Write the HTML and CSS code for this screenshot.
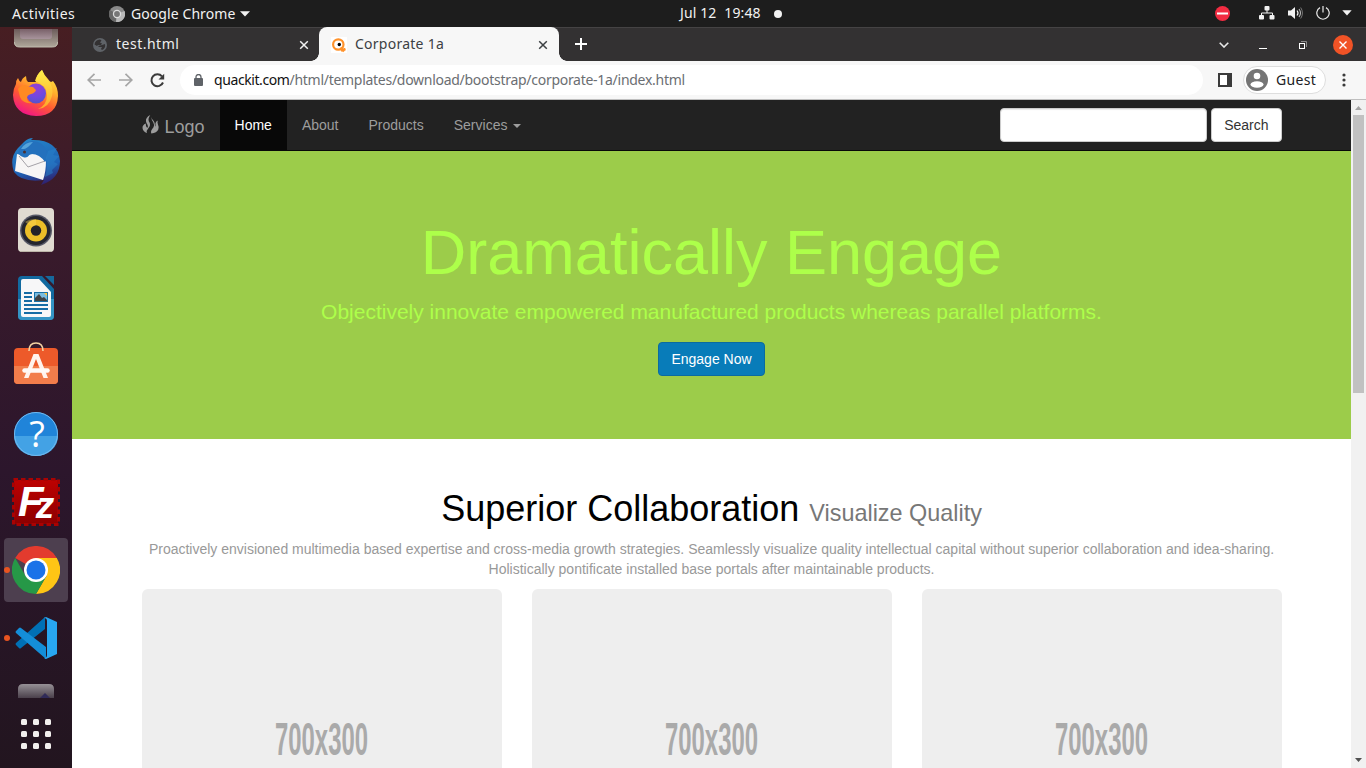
FILE: index.html
```html
<!DOCTYPE html>
<html lang="en">
<head>
<meta charset="utf-8">
<title>Corporate 1a</title>
<link rel="stylesheet" href="styles.css">
</head>
<body>
<header class="topbar">
  <span class="activities">Activities</span>
  <svg class="app-icon" width="16" height="16" viewBox="0 0 16 16"><circle cx="8" cy="8" r="8" fill="#8a8a8a"/><path d="M8 8 L1 4 A8 8 0 0 0 7 16Z" fill="#686868"/><path d="M8 8 L15.5 5 A8 8 0 0 1 7 16Z" fill="#b8b8b8"/><circle cx="8" cy="8" r="4.2" fill="#ddd"/><circle cx="8" cy="8" r="2.9" fill="#777"/></svg>
  <span class="app-name">Google Chrome</span>
  <svg class="app-caret" width="10" height="6" viewBox="0 0 10 6"><path d="M0 .3h10L5 5.6z" fill="#f2f2f2"/></svg>
  <div class="clock"><span>Jul 12</span><span>19:48</span><i class="dot"></i></div>
  <div class="tray">
    <svg width="15" height="15" viewBox="0 0 15 15"><circle cx="7.5" cy="7.5" r="7.5" fill="#f22c42"/><rect x="2" y="6.5" width="11" height="2" fill="#fff"/></svg>
    <svg class="net" width="16" height="14" viewBox="0 0 16 14" fill="#f2f2f2"><rect x="5.5" y="0" width="5" height="4.5" rx="1"/><rect x="0" y="9" width="5" height="4.500" rx="1"/><rect x="10.500" y="9" width="5" height="4.500" rx="1"/><path d="M8 4v3M2.500 9.500V7h11v2.500" fill="none" stroke="#f2f2f2"/></svg>
    <svg class="vol" width="16" height="14" viewBox="0 0 16 14"><path d="M0 4.500h3L7 1v12L3 9.500H0z" fill="#f2f2f2"/><path d="M9 4.500q2 2.500 0 5" fill="none" stroke="#f2f2f2" stroke-width="1.200"/><path d="M11 3q3 4 0 8" fill="none" stroke="#bbb" stroke-width="1.100"/><path d="M12.700 1.500q3.500 5.500 0 11" fill="none" stroke="#777"/></svg>
    <svg class="power" width="14" height="14" viewBox="0 0 14 14" fill="none" stroke="#e8e8e8" stroke-width="1.200"><path d="M4 1.600a6.200 6.200 0 1 0 6 0M7 0v6.500"/></svg>
    <svg class="tcaret" width="10" height="6" viewBox="0 0 10 6"><path d="M.3.300h9.400L5 5.400z" fill="#f2f2f2"/></svg>
  </div>
</header>
<div class="desktop">
  <aside class="dock">
    <div class="slot-files"><svg width="44" height="21" viewBox="0 0 44 21"><defs><linearGradient id="fg" x2="0" y2="1"><stop stop-color="#6b5a59"/><stop offset="1" stop-color="#b0a89b"/></linearGradient><linearGradient id="fi" x2="0" y2="1"><stop stop-color="#786068"/><stop offset="1" stop-color="#a8949c"/></linearGradient></defs><path d="M0 2h44v13q0 5-5 5H5q-5 0-5-5z" fill="url(#fg)"/><path d="M.500 15q0 5 5 5h33q5 0 5-5" fill="none" stroke="#c0bcae"/><path d="M6 2h32v7q0 3-3 3H9q-3 0-3-3z" fill="url(#fi)"/></svg></div>
    <div class="slot"><svg width="48" height="48" viewBox="0 0 48 48"><defs><linearGradient id="ff" x1=".8" y1="0" x2=".3" y2="1"><stop stop-color="#fff14a"/><stop offset=".35" stop-color="#ffb02c"/><stop offset=".65" stop-color="#ff5a32"/><stop offset="1" stop-color="#f0128a"/></linearGradient><linearGradient id="fy" x2="0" y2="1"><stop stop-color="#fff04a"/><stop offset="1" stop-color="#ffa52a"/></linearGradient><radialGradient id="fp" cx=".5" cy=".2" r=".8"><stop stop-color="#9a3fd0"/><stop offset=".6" stop-color="#7048e0"/><stop offset="1" stop-color="#5654c8"/></radialGradient></defs><path d="M4 14Q4 10 6 8q1 3 3 4 1-4 5-6 0 4 2 6l8 0q0-7 6-12 2 5 6 9 1 2 3 3l2-1q5 6 5 15Q45 46 24 46 2 45 1 25 1 19 4 14z" fill="url(#ff)"/><path d="M23 11q2-7 7-11 2 6 6 10 6 7 4 16-3 12-14 13 9-4 9-14 0-10-12-14z" fill="url(#fy)"/><circle cx="24" cy="23.500" r="10" fill="url(#fp)"/><path d="M6 19q3-4 7-4 4 2 8 2l3 3q-1 3-5 4-4 1-4 4 0 4 5 5-9 1-12-6z" fill="#ff8a22"/></svg></div>
    <div class="slot"><svg width="48" height="48" viewBox="0 0 48 48"><defs><linearGradient id="tb" x1=".3" y1="0" x2=".6" y2="1"><stop stop-color="#2585c9"/><stop offset=".65" stop-color="#1e62b5"/><stop offset="1" stop-color="#30206e"/></linearGradient></defs><path d="M12 4q4-4 9-4l-2 2q27-1 29 21 0 18-19 24l3-5Q10 45 2 34-3 20 6 10z" fill="url(#tb)"/><path d="M5 16l8 2 11-3 10 7q0 12-3 20L3 33z" fill="#f7f5f5"/><path d="M7 18l9 11 17-6" fill="none" stroke="#a5a2a8"/><path d="M6 15Q9 4 20 3q12 0 15 12 1 7-2 9-6-9-15-8-3 5-7 3-3-1-5-4z" fill="#2471bd"/><path d="M9 11q4-7 12-7-6 7-9 7z" fill="#56a4da"/><path d="M36 13l9-3-4 7 6 1-5 6 4 2-6 6 1 3-8 4q3-10 1-19z" fill="#2a80c8" opacity=".55"/><circle cx="12.500" cy="14" r="1.500" fill="#4b3030"/></svg></div>
    <div class="slot"><svg width="48" height="48" viewBox="0 0 48 48"><rect x="6" y="2" width="36" height="44" rx="4" fill="#e0dbd1"/><path d="M8 45.500h32" stroke="#bbb5a8"/><circle cx="24" cy="24.500" r="16" fill="#575967"/><circle cx="24" cy="24.500" r="14.500" fill="#24262f"/><circle cx="24" cy="24.500" r="11" fill="#ebbf28"/><circle cx="24" cy="24.500" r="5.200" fill="#222329"/><path d="M20 21l-7-5q4-3 11-3v6z" fill="#ffd95c" opacity=".4"/></svg></div>
    <div class="slot"><svg width="48" height="48" viewBox="0 0 48 48"><path d="M10 2h20l12 13v27q0 4-4 4H10q-4 0-4-4V6q0-4 4-4z" fill="#126aa0"/><path d="M6 25h36v17q0 4-4 4H10q-4 0-4-4z" fill="#3494c5"/><path d="M11 5h16l12 13v23q0 2-2 2H11q-2 0-2-2V7q0-2 2-2z" fill="#f7f7f8"/><path d="M33 2h9v9z" fill="#16699d"/><path d="M12 19h8M12 23h8M12 27h8M12 31h24M12 35h24M12 39h18" stroke="#166ca5" stroke-width="2"/><rect x="22" y="18" width="14" height="10" fill="#1870a6"/><rect x="23" y="19" width="12" height="8" fill="#7abce0"/><path d="M23 27v-3l4-4 3 4 2-1 3 3v1z" fill="#404346"/><path d="M32 19h3v3z" fill="#ffc437"/></svg></div>
    <div class="slot"><svg width="48" height="48" viewBox="0 0 48 48"><rect x="2" y="6" width="44" height="36" rx="4" fill="#ed5a2a"/><path d="M2 24h44v14q0 4-4 4H6q-4 0-4-4z" fill="#f27d4b"/><path d="M17 9q0-8 7-8t7 8" fill="none" stroke="#f4d2a3" stroke-width="1.600"/><path d="M12 36l9.500-24h5L36 36h-4.500L24 17l-7.500 19z" fill="#fff3ed"/><path d="M12.500 28.500h23" stroke="#fff9f6" stroke-width="4.500" stroke-linecap="round"/></svg></div>
    <div class="slot"><svg width="48" height="48" viewBox="0 0 48 48"><circle cx="24" cy="24" r="22" fill="#2084d9"/><path d="M2 26a22 20 0 0 0 44 0z" fill="#43a2e5"/><circle cx="24" cy="24" r="21.500" fill="none" stroke="#73b9ed"/><text x="25" y="37" class="help-mark">?</text></svg></div>
    <div class="slot"><svg width="48" height="48" viewBox="0 0 48 48"><defs><linearGradient id="fz" x2="0" y2="1"><stop stop-color="#bd0101"/><stop offset="1" stop-color="#8c0001"/></linearGradient></defs><rect x="2" y="2" width="44" height="44" fill="url(#fz)"/><rect x="1.500" y="1.500" width="45" height="45" fill="none" stroke="#aa0202" stroke-width="3" stroke-dasharray="4.500 3"/><text x="6" y="38" class="fz-mark">F<tspan dx="-8" dy="2" class="fz-z">z</tspan></text></svg></div>
    <div class="slot active"><svg width="48" height="48" viewBox="0 0 48 48"><path d="M24 24L3.200 12A24 24 0 0 1 44.800 12z" fill="#e33b2e"/><path d="M24 12h20.800A24 24 0 0 1 24 48l10.400-18z" fill="#fec515"/><path d="M13.600 30L3.200 12A24 24 0 0 0 24 48l10.400-18z" fill="#269847"/><circle cx="24" cy="24" r="12" fill="#fff"/><circle cx="24" cy="24" r="9.500" fill="#1a72e8"/></svg></div>
    <div class="slot running"><svg width="48" height="48" viewBox="0 0 48 48"><path d="M33 3v12L9 34q-1 1-2 0l-3-3q-1-1 0-2z" fill="#0070b5"/><path d="M7 14q1-1 2 0l25 19v12L4 19q-1-1 0-2z" fill="#148ed8"/><path d="M34 3l11 5v32l-11 5-2-1q3 0 3-3V7q0-3-3-3z" fill="#28a7f1"/></svg></div>
    <div class="slot-trash"><svg width="36" height="14" viewBox="0 0 36 14"><defs><linearGradient id="tr" x2="0" y2="1"><stop stop-color="#969196"/><stop offset="1" stop-color="#4a404b"/></linearGradient></defs><path d="M0 14V5q0-5 5-5h26q5 0 5 5v9z" fill="url(#tr)"/><path d="M22 14l5-5 5 5z" fill="#302b58"/></svg></div>
    <div class="apps"><i></i><i></i><i></i><i></i><i></i><i></i><i></i><i></i><i></i></div>
  </aside>
  <main class="window">
    <div class="tabs">
      <div class="tab">
        <svg width="14" height="14" viewBox="0 0 14 14"><circle cx="7" cy="7" r="7" fill="#5f6368"/><path d="M7 1.500l1.500 1L7 4.500l2 1-1 1.500H5l-1 1-2.500-1.500Q2 2 7 1.500zM9 7l3-1q1 4-3 6l-1-1 1-2H6L5 8z" fill="#333132"/></svg>
        <span class="t1">test.html</span>
        <svg class="close" width="10" height="10" viewBox="0 0 10 10"><path d="M1.200 1.200l7.600 7.600M8.800 1.200L1.200 8.800" stroke="#f1f1f1" stroke-width="1.500"/></svg>
      </div>
      <div class="tab current">
        <svg width="16" height="16" viewBox="0 0 16 16"><path fill="#fff" d="M0 0h16v16H0z"/><circle cx="7.300" cy="7.500" r="5.200" fill="#fff" stroke="#ff922b" stroke-width="2.200"/><path d="M9.500 10.500l3.500 4M10 13.500l4.500-1.500" stroke="#ff922b" stroke-width="2.400"/><circle cx="8.300" cy="7.500" r="1.700"/></svg>
        <span class="t2">Corporate 1a</span>
        <svg class="close" width="10" height="10" viewBox="0 0 10 10"><path d="M1.200 1.200l7.600 7.600M8.800 1.200L1.200 8.800" stroke="#3c4043" stroke-width="1.500"/></svg>
      </div>
      <svg class="plus" width="12" height="12" viewBox="0 0 12 12"><path d="M6 0v12M0 6h12" stroke="#fff" stroke-width="2"/></svg>
      <div class="wincontrols">
        <svg width="10" height="6" viewBox="0 0 10 6"><path d="M.700.700L5 5 9.300.700" fill="none" stroke="#e8e8e8" stroke-width="1.600"/></svg>
        <svg class="min" width="8" height="6" viewBox="0 0 8 6"><path d="M0 5.500h8" stroke="#fff"/></svg>
        <svg class="max" width="8" height="8" viewBox="0 0 8 8"><path d="M2 .500h5.500V6" fill="none" stroke="#8c8b8b"/><rect x=".500" y="2.500" width="5" height="5" fill="none" stroke="#fff"/></svg>
        <svg class="x" width="20" height="20" viewBox="0 0 20 20"><circle cx="10" cy="10" r="10" fill="#f15326"/><path d="M6.500 6.500l7 7M13.500 6.500l-7 7" stroke="#fff" stroke-width="1.400"/></svg>
      </div>
    </div>
    <div class="toolbar">
      <svg class="back" width="14" height="14" viewBox="0 0 14 14" fill="none" stroke="#a6a6a6" stroke-width="1.700"><path d="M14 7H1.500M7.500.800L1.200 7l6.300 6.200"/></svg>
      <svg class="fwd" width="14" height="14" viewBox="0 0 14 14" fill="none" stroke="#a6a6a6" stroke-width="1.700"><path d="M0 7h12.500M6.500.800L12.800 7l-6.300 6.200"/></svg>
      <svg class="reload" width="15" height="15" viewBox="0 0 15 15"><path d="M12 3.300A6 6 0 1 0 13 9.500" fill="none" stroke="#3b3b3b" stroke-width="2"/><path d="M14.200.800v5.700H8.500z" fill="#3b3b3b"/></svg>
      <div class="omnibox">
        <svg width="9" height="12" viewBox="0 0 9 12"><rect y="4" width="9" height="8" rx="1" fill="#5f6368"/><path d="M2 5V3a2.500 2.500 0 0 1 5 0v2" fill="none" stroke="#5f6368" stroke-width="1.300"/></svg>
        <span class="host">quackit.com</span><span class="path">/html/templates/download/bootstrap/corporate-1a/index.html</span>
      </div>
      <svg class="panel" width="14" height="14" viewBox="0 0 14 14"><path d="M0 0h14v14H0z" fill="#3b3b3b"/><path d="M2 2h7v10H2z" fill="#fff"/></svg>
      <div class="profile">
        <svg width="22" height="22" viewBox="0 0 22 22"><circle cx="11" cy="11" r="11" fill="#757575"/><circle cx="11" cy="7" r="3.300" fill="#fff"/><ellipse cx="11" cy="15.500" rx="6.500" ry="3.300" fill="#fff"/></svg>
        <span class="guest">Guest</span>
      </div>
      <svg class="menu" width="4" height="14" viewBox="0 0 4 14" fill="#3b3b3b"><circle cx="2" cy="2" r="1.600"/><circle cx="2" cy="7" r="1.600"/><circle cx="2" cy="12" r="1.600"/></svg>
    </div>
    <div class="viewport">
      <div class="page">
        <nav class="navbar">
          <div class="container nav-inner">
            <a class="brand"><svg width="18" height="19" viewBox="0 0 18 19" fill="#9d9d9d"><path d="M8.300 0Q3.300 2.500 4 6.500q.4 2 1.500 3.200 1 1.800-.3 3.300-1.700-1.700-1.400-4.500Q.3 10 .500 13q.4 3.600 4.500 5-.8-2.800 1.200-4.600 2.300-1.700 1.800-4.400-.3-1.500-1.200-2.700Q5.800 3.500 8.300 0z"/><path d="M9.200 2q.3 3 2 5.200 1.500 2.300.3 5-1.500 2-2.200 3.300-.6 1.600 0 3 5.500-.6 7-4 .9-2.700-.5-5.500-.6-1.800 0-3.500-2.200.8-2.400 3.300.3 1.700.1 3-.4-.9-.6-2.400-.1-2-1.400-3.600Q9.800 4.200 9.200 2z"/></svg>Logo</a>
            <a class="nav on">Home</a><a class="nav">About</a><a class="nav">Products</a><a class="nav">Services<i class="caret"></i></a>
            <div class="search"><span class="field"></span><span class="btn">Search</span></div>
          </div>
        </nav>
        <section class="hero">
          <h1>Dramatically Engage</h1>
          <p>Objectively innovate empowered manufactured products whereas parallel platforms.</p>
          <span class="btn primary">Engage Now</span>
        </section>
        <section class="container intro">
          <h2>Superior Collaboration <small>Visualize Quality</small></h2>
          <p>Proactively envisioned multimedia based expertise and cross-media growth strategies. Seamlessly visualize quality intellectual capital without superior collaboration and idea-sharing. Holistically pontificate installed base portals after maintainable products.</p>
          <div class="cards"><div class="card"><span>700x300</span></div><div class="card"><span>700x300</span></div><div class="card"><span>700x300</span></div></div>
        </section>
      </div>
      <div class="scrollbar">
        <svg width="7" height="4" viewBox="0 0 7 4"><path d="M0 4L3.500 0 7 4z" fill="#a3a3a3"/></svg>
        <div class="thumb"></div>
        <svg class="down" width="7" height="4" viewBox="0 0 7 4"><path d="M0 0h7L3.500 4z" fill="#505050"/></svg>
      </div>
    </div>
  </main>
</div>
</body>
</html>
```
FILE: styles.css
```css
* { box-sizing: border-box; }
body { margin: 0; width: 1366px; height: 768px; overflow: hidden; font-family: "Noto Sans", sans-serif; font-size: 14px; }
svg { display: block; flex: none; }
span, a { white-space: nowrap; }

.topbar { position: relative; display: flex; align-items: center; height: 27px; padding-left: 12px; background: #1d1d1d; color: #f2f2f2; }
.activities { width: 63px; letter-spacing: .5px; }
.app-icon { margin: 0 6px 0 34px; }
.app-name { width: 104px; letter-spacing: .08px; }
.app-caret { margin-left: 5px; }
.clock { display: flex; align-items: center; gap: 8px; margin-left: 430px; padding-bottom: 2px; }
.clock span { letter-spacing: .1px; }
.dot { width: 8px; height: 8px; margin: 2px 0 0 5px; border-radius: 50%; background: #f2f2f2; }
.tray { display: flex; align-items: center; margin-left: auto; padding: 0 14px 1px 0; }
.net { margin-left: 29px; }
.vol { margin-left: 13px; }
.power { margin-left: 12px; }
.tcaret { margin-left: 12px; }

.desktop { display: flex; height: 741px; }
.dock { width: 72px; display: flex; flex-direction: column; align-items: center; background: linear-gradient(#471e22, #3b1b2b 24%, #2c162c 60%, #22151f); }
.slot-files { height: 33px; }
.slot { width: 64px; height: 64px; margin: 2px 0; padding: 8px; border-radius: 4px; position: relative; flex: none; }
.active { background: #4d3f4f; }
.active::before, .running::before { content: ""; position: absolute; left: 0; top: 29px; width: 6px; height: 6px; border-radius: 50%; background: #e95420; }
.slot-trash { height: 47px; padding-top: 12px; }
.apps { display: grid; grid-template-columns: repeat(3, 6px); gap: 6px; }
.apps i { height: 6px; border-radius: 1.500px; background: #f2f0ee; }
.help-mark { font: 36px "Open Sans", sans-serif; fill: #fff; text-anchor: middle; }
.fz-mark { font: italic bold 42px "Liberation Sans", sans-serif; fill: #fff; }
.fz-z { font-size: 37px; }

.window { width: 1294px; display: flex; flex-direction: column; }
.tabs { height: 34px; display: flex; background: #333132; border-top: 1px solid #454344; color: #eee; }
.tab { display: flex; align-items: center; width: 247px; padding: 0 10px 0 21px; border-bottom-right-radius: 8px; }
.tab .close { margin-left: auto; }
.tab span { padding-bottom: 2px; }
.t1 { margin-left: 9px; letter-spacing: .5px; }
.current { position: relative; width: 240px; height: 34px; margin-top: -1px; padding: 1px 11px 0 12px; border-radius: 8px 8px 0 0; background: #f7f7f7; color: #3c4043; }
.current::before, .current::after { content: ""; position: absolute; bottom: 0; width: 8px; height: 8px; }
.current::before { left: -8px; background: radial-gradient(circle at 0 0, transparent 7.500px, #f7f7f7 8px); }
.current::after { right: -8px; background: radial-gradient(circle at 100% 0, transparent 7.500px, #f7f7f7 8px); }
.t2 { margin-left: 8px; letter-spacing: .25px; }
.plus { margin: 10px 0 0 16px; }
.wincontrols { display: flex; align-items: center; margin-left: auto; padding-right: 13px; }
.min { margin: 3px 0 0 30px; }
.max { margin-left: 32px; }
.x { margin-left: 26px; }

.toolbar { height: 39px; display: flex; align-items: center; padding-left: 15px; background: #f7f7f7; border-bottom: 1px solid #bfbfbf; }
.fwd { margin-left: 18px; }
.reload { margin-left: 17px; }
.omnibox { width: 1023px; height: 30px; display: flex; align-items: center; margin-left: 15px; padding-left: 14px; border-radius: 15px; background: #fff; }
.omnibox span, .guest { padding-bottom: 2px; }
.host { margin-left: 11px; color: #111; letter-spacing: -.41px; }
.path { color: #6b6e72; letter-spacing: -.28px; }
.panel { margin-left: 15px; }
.profile { width: 83px; height: 28px; display: flex; align-items: center; margin-left: 11px; padding-left: 2px; border: 1px solid #dedede; border-radius: 14px; background: #fff; }
.guest { margin-left: 8px; color: #202124; letter-spacing: .35px; }
.menu { margin-left: 16px; }

.viewport { flex: 1; min-height: 0; display: flex; }
.page { width: 1279px; overflow: hidden; background: #fff; font: 14px/20px "Liberation Sans", Arial, sans-serif; }
.container { width: 1170px; margin: 0 auto; padding: 0 15px; }
.navbar { height: 51px; background: #222; border-bottom: 1px solid #080808; }
.nav-inner { display: flex; height: 50px; }
.brand { display: flex; padding: 15px 15px 15px 0; gap: 5px; font-size: 18px; line-height: 24px; color: #9d9d9d; }
.nav { display: flex; padding: 15px; color: #9d9d9d; }
.on { background: #080808; color: #fff; }
.caret { margin: 9px 0 0 6px; width: 8px; height: 4px; border: 4px solid transparent; border-top-color: #9d9d9d; border-bottom: 0; }
.search { display: flex; gap: 4px; margin: 8px 0 0 auto; }
.field { width: 207px; height: 34px; border: 1px solid #ccc; border-radius: 4px; background: #fff; box-shadow: inset 0 1px 1px rgba(0,0,0,.08); }
.btn { display: inline-block; height: 34px; padding: 6px 12px; border: 1px solid #ccc; border-radius: 4px; background: #fff; color: #333; }
.primary { background: #087cb9; border-color: #0b6ba0; color: #fff; }
.hero { height: 288px; padding-top: 67px; text-align: center; background: #9ccc4a; color: #adff4a; }
.hero h1 { margin: 0; font-size: 63px; line-height: 69px; font-weight: 400; }
.hero p { margin: 10px 0 15px; font-size: 21px; line-height: 30px; }
.intro { padding-top: 50px; text-align: center; }
.intro h2 { margin: 0; font-size: 36px; line-height: 40px; font-weight: 400; color: #000; }
.intro small { font-size: 23.4px; color: #777; }
.intro p { margin: 6px 0 10px; color: #999; }
.cards { display: flex; gap: 30px; }
.card { width: 360px; height: 300px; display: flex; align-items: center; justify-content: center; border-radius: 6px; background: #eee; }
.card span { font-size: 46.5px; line-height: 50px; font-weight: 700; color: #aaa; transform: scaleX(.514); }
.scrollbar { width: 15px; display: flex; flex-direction: column; align-items: center; padding-top: 6px; background: #f1f1f1; }
.thumb { width: 11px; height: 278px; margin-top: 5px; background: #c1c1c1; }
.down { margin: auto 0 6px; }
```
